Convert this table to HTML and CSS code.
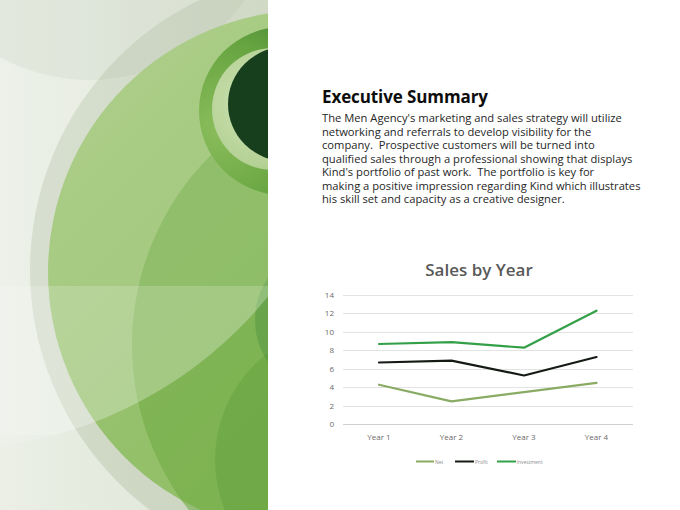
FILE: index.html
```html
<!DOCTYPE html>
<html>
<head>
<meta charset="utf-8">
<link rel="stylesheet" href="styles.css">
</head>
<body>
<div class="slide">
  <div class="art">
    <svg class="art-svg" viewBox="0 0 268 510" width="268" height="510">
      <defs>
        <linearGradient id="bg" x1="0" y1="0" x2="1" y2="0">
          <stop offset="0" stop-color="#ebefe6"/>
          <stop offset="1" stop-color="#dce4d3"/>
        </linearGradient>
        <radialGradient id="ringg" cx="0.12" cy="0.6" r="0.95">
          <stop offset="0" stop-color="#8abd5b"/>
          <stop offset="0.55" stop-color="#66a440"/>
          <stop offset="1" stop-color="#3a7834"/>
        </radialGradient>
        <radialGradient id="lightg" cx="0.4" cy="0.45" r="0.7">
          <stop offset="0" stop-color="#d2e4ba"/>
          <stop offset="1" stop-color="#a9ca86"/>
        </radialGradient>
        <linearGradient id="greeng" x1="0" y1="0" x2="1" y2="1">
          <stop offset="0" stop-color="#a4c87c"/>
          <stop offset="1" stop-color="#86b95a"/>
        </linearGradient>
        <clipPath id="band">
          <rect x="0" y="286" width="268" height="149"/>
        </clipPath>
      </defs>
      <rect width="268" height="510" fill="url(#bg)"/>
      <circle cx="330" cy="270" r="300" fill="#9fae8e" opacity="0.3"/>
      <circle cx="90" cy="-110" r="190" fill="#7f8f75" opacity="0.1"/>
      <circle cx="310" cy="272" r="262" fill="url(#greeng)"/>
      <circle cx="400" cy="345" r="268" fill="#72ab45" opacity="0.6"/>
      <circle cx="350" cy="460" r="135" fill="#5c9d3a" opacity="0.4"/>
      <circle cx="330" cy="320" r="75" fill="#3f8a3a" opacity="0.35"/>
      <circle cx="-52" cy="37" r="412" fill="#ffffff" opacity="0.12"/>
      <circle cx="-52" cy="37" r="412" fill="#ffffff" opacity="0.18" clip-path="url(#band)"/>
      <circle cx="283" cy="111" r="84" fill="url(#ringg)"/>
      <circle cx="273" cy="109" r="61" fill="url(#lightg)"/>
      <circle cx="285" cy="104" r="57" fill="#173f1d"/>
    </svg>
  </div>
  <div class="panel">
    <h1 class="title">Executive Summary</h1>
    <p class="body">The Men Agency's marketing and sales strategy will utilize<br>networking and referrals to develop visibility for the<br>company.&nbsp; Prospective customers will be turned into<br>qualified sales through a professional showing that displays<br>Kind's portfolio of past work.&nbsp; The portfolio is key for<br>making a positive impression regarding Kind which illustrates<br>his skill set and capacity as a creative designer.</p>
    <div class="chart">
      <svg viewBox="310 250 340 230" width="340" height="230">
        <text class="ctitle" x="479" y="276" text-anchor="middle">Sales by Year</text>
        <g class="grid">
          <line x1="343" x2="633" y1="295.5" y2="295.5"/>
          <line x1="343" x2="633" y1="313.5" y2="313.5"/>
          <line x1="343" x2="633" y1="332.5" y2="332.5"/>
          <line x1="343" x2="633" y1="350.5" y2="350.5"/>
          <line x1="343" x2="633" y1="369.5" y2="369.5"/>
          <line x1="343" x2="633" y1="387.5" y2="387.5"/>
          <line x1="343" x2="633" y1="406.5" y2="406.5"/>
          <line class="base" x1="343" x2="633" y1="424.5" y2="424.5"/>
        </g>
        <g class="ylab" text-anchor="end">
          <text x="334" y="298">14</text>
          <text x="334" y="316">12</text>
          <text x="334" y="335">10</text>
          <text x="334" y="353">8</text>
          <text x="334" y="372">6</text>
          <text x="334" y="390">4</text>
          <text x="334" y="409">2</text>
          <text x="334" y="427">0</text>
        </g>
        <g class="xlab" text-anchor="middle">
          <text x="379" y="440">Year 1</text>
          <text x="451.5" y="440">Year 2</text>
          <text x="524" y="440">Year 3</text>
          <text x="596.5" y="440">Year 4</text>
        </g>
        <polyline class="s-net" points="379,384.7 451.5,401.4 524,392.1 596.5,382.9"/>
        <polyline class="s-profit" points="379,362.5 451.5,360.7 524,375.5 596.5,357"/>
        <polyline class="s-inv" points="379,344 451.5,342.2 524,347.7 596.5,310.7"/>
        <g class="legend">
          <line class="s-net" x1="416" x2="434" y1="461.5" y2="461.5"/>
          <text x="435" y="463.5">Net</text>
          <line class="s-profit" x1="455" x2="474" y1="461.5" y2="461.5"/>
          <text x="475" y="463.5">Profit</text>
          <line class="s-inv" x1="497" x2="516" y1="461.5" y2="461.5"/>
          <text x="516.5" y="463.5">Investment</text>
        </g>
      </svg>
    </div>
  </div>
</div>
</body>
</html>
```

FILE: styles.css
```css
html, body {
  margin: 0;
  padding: 0;
  background: #ffffff;
}
.slide {
  width: 680px;
  height: 510px;
  display: flex;
  overflow: hidden;
  font-family: "Open Sans", "Noto Sans", sans-serif;
}
.art {
  width: 268px;
  height: 510px;
  flex: none;
}
.art-svg {
  display: block;
}
.panel {
  flex: 1;
  padding: 85px 0 0 54px;
}
.title {
  margin: 0;
  font-size: 17px;
  line-height: 23px;
  font-weight: 700;
  color: #0d0d0d;
  letter-spacing: -0.1px;
}
.body {
  margin: 3px 0 0 0;
  font-size: 11.2px;
  line-height: 13.5px;
  color: #262626;
  white-space: nowrap;
}
.chart {
  margin: 44px 0 0 -12px;
  width: 340px;
  height: 230px;
}
.chart svg {
  display: block;
}
.ctitle {
  font-family: "Open Sans", sans-serif;
  font-size: 17px;
  font-weight: 600;
  fill: #595959;
}
.grid line {
  stroke: #e3e3e3;
  stroke-width: 1;
}
.grid line.base {
  stroke: #d0d0d0;
}
.ylab text, .xlab text {
  font-family: "Open Sans", sans-serif;
  font-size: 8px;
  fill: #6b6b6b;
}
.s-net, .s-profit, .s-inv {
  fill: none;
  stroke-width: 2.2;
  stroke-linejoin: round;
  stroke-linecap: round;
}
.s-net { stroke: #8aab64; }
.s-profit { stroke: #151a15; }
.s-inv { stroke: #33a048; }
.legend text {
  font-family: "Open Sans", sans-serif;
  font-size: 5px;
  fill: #8c8c8c;
}
.legend line {
  stroke-width: 2;
  stroke-linecap: butt;
}
```
